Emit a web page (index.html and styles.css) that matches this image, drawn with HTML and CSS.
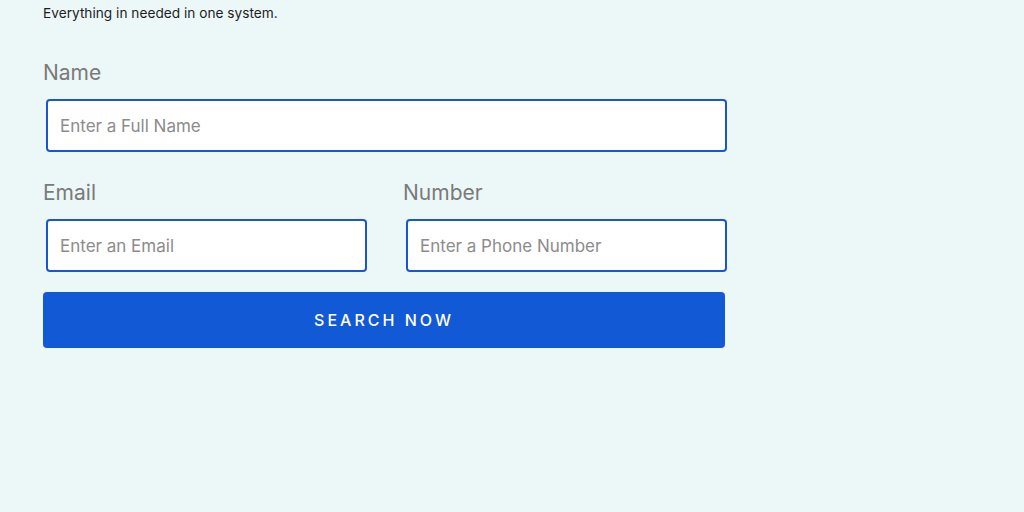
FILE: index.html
```html
<!DOCTYPE html>
<html lang="en">
<head>
    <meta charset="UTF-8">
    <meta name="viewport" content="width=device-width, initial-scale=1.0">
    <title>Search</title>
    <link rel="stylesheet" href="styles.css">
</head>
<body>
    <div class="page">
        <p class="tagline">Everything in needed in one system.</p>
        <form class="search-form">
            <div class="field">
                <label for="name">Name</label>
                <input type="text" id="name" placeholder="Enter a Full Name">
            </div>
            <div class="row">
                <div class="field">
                    <label for="email">Email</label>
                    <input type="text" id="email" placeholder="Enter an Email">
                </div>
                <div class="field">
                    <label for="number">Number</label>
                    <input type="text" id="number" placeholder="Enter a Phone Number">
                </div>
            </div>
            <button type="button" class="search-btn">Search Now</button>
        </form>
    </div>
</body>
</html>
```

FILE: styles.css
```css
body {
    margin: 0;
    background-color: #ecf7f8;
    font-family: Inter, "Noto Sans", sans-serif;
    color: #1d1d1d;
}
.page {
    width: 684px;
    padding: 3px 0 0 43px;
}
.tagline {
    margin: 0;
    font-size: 13.7px;
    line-height: 20px;
}
.search-form {
    margin-top: 38px;
    display: flex;
    flex-direction: column;
}
.row {
    display: flex;
    gap: 36px;
    margin-top: 29px;
}
.row .field {
    flex: 1;
}
.field label {
    display: block;
    font-size: 21px;
    line-height: 24px;
    color: #7a7a7a;
    margin-bottom: 14px;
}
.field input {
    display: block;
    box-sizing: border-box;
    width: calc(100% - 3px);
    height: 53px;
    margin-left: 3px;
    padding: 0 12px;
    border: 2px solid #1a55d2;
    border-radius: 4px;
    background: white;
    font-family: Inter, "Noto Sans", sans-serif;
    font-size: 17px;
    color: #333;
    outline: none;
}
.field input::placeholder {
    color: #8c8c8c;
}
.search-btn {
    margin-top: 20px;
    width: 682px;
    height: 56px;
    border: none;
    border-radius: 4px;
    background-color: #1259d6;
    color: white;
    font-family: Inter, "Noto Sans", sans-serif;
    font-size: 16px;
    font-weight: 500;
    letter-spacing: 3px;
    text-transform: uppercase;
    cursor: pointer;
}
```
